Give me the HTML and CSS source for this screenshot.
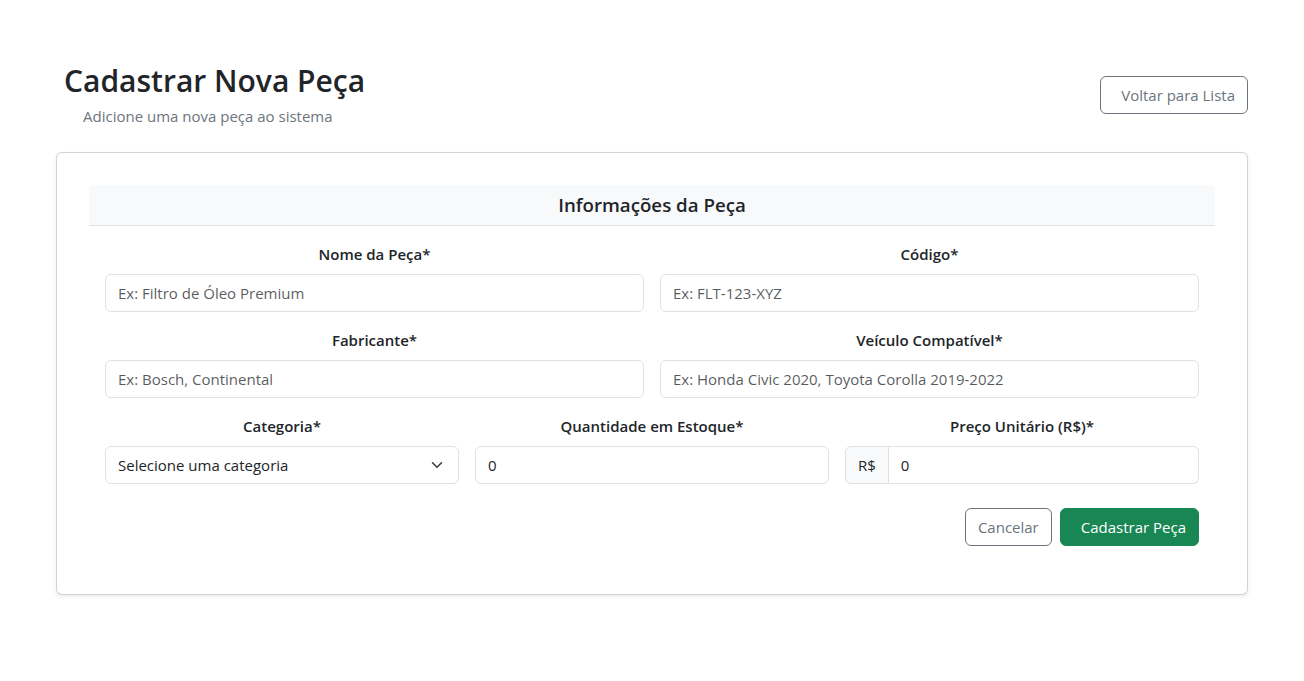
FILE: index.html
```html
<!DOCTYPE html>
<html lang="pt-BR">
<head>
<meta charset="utf-8">
<title>Cadastrar Nova Peça</title>
<link rel="stylesheet" href="styles.css">
</head>
<body>
<div class="page">
  <div class="page-header">
    <div class="heading">
      <h1 class="title">Cadastrar Nova Peça</h1>
      <p class="subtitle">Adicione uma nova peça ao sistema</p>
    </div>
    <button class="btn btn-outline btn-icon" type="button">Voltar para Lista</button>
  </div>

  <div class="card">
    <div class="card-body">
      <div class="section-header">Informações da Peça</div>
      <form class="form-body">
        <div class="grid grid-2">
          <div class="field">
            <label class="label">Nome da Peça*</label>
            <input class="input" type="text" placeholder="Ex: Filtro de Óleo Premium">
          </div>
          <div class="field">
            <label class="label">Código*</label>
            <input class="input" type="text" placeholder="Ex: FLT-123-XYZ">
          </div>
        </div>
        <div class="grid grid-2">
          <div class="field">
            <label class="label">Fabricante*</label>
            <input class="input" type="text" placeholder="Ex: Bosch, Continental">
          </div>
          <div class="field">
            <label class="label">Veículo Compatível*</label>
            <input class="input" type="text" placeholder="Ex: Honda Civic 2020, Toyota Corolla 2019-2022">
          </div>
        </div>
        <div class="grid grid-3">
          <div class="field">
            <label class="label">Categoria*</label>
            <div class="select-wrap">
              <select class="input select">
                <option>Selecione uma categoria</option>
              </select>
              <svg class="chevron" width="16" height="12" viewBox="0 0 16 16" aria-hidden="true"><path d="m2 5 6 6 6-6" fill="none" stroke="#343a40" stroke-linecap="round" stroke-linejoin="round" stroke-width="2"/></svg>
            </div>
          </div>
          <div class="field">
            <label class="label">Quantidade em Estoque*</label>
            <input class="input" type="number" value="0">
          </div>
          <div class="field">
            <label class="label">Preço Unitário (R$)*</label>
            <div class="input-group">
              <span class="addon">R$</span>
              <input class="input group-input" type="text" value="0">
            </div>
          </div>
        </div>
        <div class="actions">
          <button class="btn btn-outline" type="button">Cancelar</button>
          <button class="btn btn-success btn-icon" type="submit">Cadastrar Peça</button>
        </div>
      </form>
    </div>
  </div>
</div>
</body>
</html>
```
FILE: styles.css
```css
* { box-sizing: border-box; }
html, body { margin: 0; padding: 0; background: #fff; }
body {
  font-family: "Segoe UI", "Open Sans", "Noto Sans", sans-serif;
  font-size: 15px;
  line-height: 24px;
  color: #212529;
}
.page { padding: 62px 56px 40px; }
.page-header {
  display: flex;
  justify-content: space-between;
  align-items: center;
  padding-left: 8px;
  margin-bottom: 24px;
}
.title {
  margin: 0 0 4px;
  font-size: 30px;
  font-weight: 600;
  line-height: 38px;
}
.subtitle {
  margin: 0 0 0 19px;
  color: #6c757d;
  font-size: 15px;
}
.btn {
  font-family: inherit;
  font-size: 15px;
  line-height: 24px;
  height: 38px;
  padding: 6px 12px;
  border-radius: 6px;
  border: 1px solid transparent;
  background: transparent;
  cursor: pointer;
}
.btn-icon { padding-left: 20px; }
.btn-outline { border-color: #6c757d; color: #6c757d; background: #fff; }
.btn-success { background: #198754; border-color: #198754; color: #fff; }
.card {
  border: 1px solid rgba(0,0,0,.175);
  border-radius: 6px;
  background: #fff;
  box-shadow: 0 2px 4px rgba(0,0,0,.075);
}
.card-body { padding: 32px; }
.section-header {
  background: #f8f9fa;
  border-bottom: 1px solid #dee2e6;
  border-radius: 6px 6px 0 0;
  padding: 8px 16px;
  text-align: center;
  font-size: 18.7px;
  font-weight: 600;
  line-height: 24px;
}
.form-body { padding: 16px; }
.grid { display: grid; column-gap: 16px; }
.grid + .grid { margin-top: 16px; }
.grid-2 { grid-template-columns: 1fr 1fr; }
.grid-3 { grid-template-columns: 1fr 1fr 1fr; }
.field { display: flex; flex-direction: column; min-width: 0; }
.label {
  display: block;
  text-align: center;
  font-weight: 600;
  margin-bottom: 8px;
}
.input {
  display: block;
  width: 100%;
  height: 38px;
  padding: 6px 12px;
  font-family: inherit;
  font-size: 15px;
  line-height: 24px;
  color: #212529;
  background: #fff;
  border: 1px solid #dee2e6;
  border-radius: 6px;
  outline: none;
}
.input::placeholder { color: rgba(33,37,41,.75); opacity: 1; }
.select-wrap { position: relative; }
.select { appearance: none; -webkit-appearance: none; padding-right: 36px; }
.chevron { position: absolute; right: 14px; top: 13px; pointer-events: none; }
.input-group { display: flex; }
.addon {
  display: flex;
  align-items: center;
  padding: 6px 12px;
  background: #f8f9fa;
  border: 1px solid #dee2e6;
  border-radius: 6px 0 0 6px;
  height: 38px;
}
.group-input { border-left: 0; border-radius: 0 6px 6px 0; flex: 1; min-width: 0; }
.actions {
  display: flex;
  justify-content: flex-end;
  gap: 8px;
  margin-top: 24px;
}
```
